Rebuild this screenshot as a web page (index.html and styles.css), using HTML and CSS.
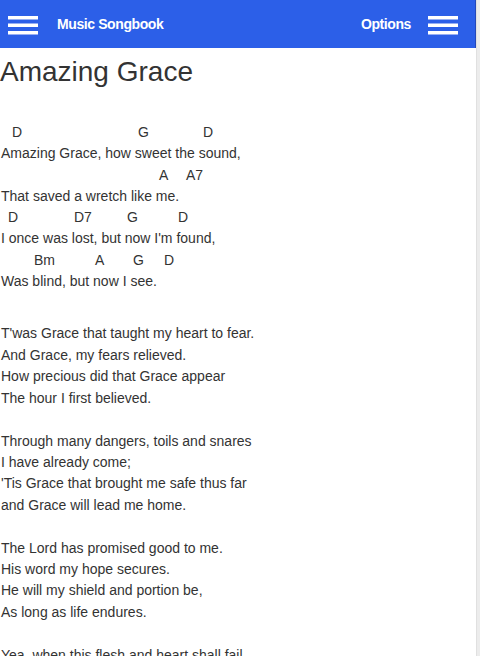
FILE: index.html
```html
<!DOCTYPE html>
<html lang="en">
<head>
<meta charset="utf-8">
<title>Music Songbook</title>
<link rel="stylesheet" href="styles.css">
</head>
<body>
<div class="page">
  <div class="main">
    <header class="topbar">
      <div class="left">
        <svg class="burger" width="30" height="19" viewBox="0 0 30 19"><rect x="0" y="0" width="30" height="3.5" fill="#fff"/><rect x="0" y="7.5" width="30" height="3.5" fill="#fff"/><rect x="0" y="15" width="30" height="3.5" fill="#fff"/></svg>
        <span class="brand">Music Songbook</span>
      </div>
      <div class="right">
        <span class="options">Options</span>
        <svg class="burger" width="30" height="19" viewBox="0 0 30 19"><rect x="0" y="0" width="30" height="3.5" fill="#fff"/><rect x="0" y="7.5" width="30" height="3.5" fill="#fff"/><rect x="0" y="15" width="30" height="3.5" fill="#fff"/></svg>
      </div>
    </header>
    <main class="song">
      <h1 class="title">Amazing Grace</h1>
      <div class="stanza chorded">
        <div class="chords"><span class="chord" style="margin-left:11px">D</span><span class="chord" style="margin-left:126px">G</span><span class="chord" style="margin-left:65px">D</span></div>
        <div class="lyric">Amazing Grace, how sweet the sound,</div>
        <div class="chords"><span class="chord" style="margin-left:158px">A</span><span class="chord" style="margin-left:27px">A7</span></div>
        <div class="lyric">That saved a wretch like me.</div>
        <div class="chords"><span class="chord" style="margin-left:7px">D</span><span class="chord" style="margin-left:66px">D7</span><span class="chord" style="margin-left:53px">G</span><span class="chord" style="margin-left:51px">D</span></div>
        <div class="lyric">I once was lost, but now I'm found,</div>
        <div class="chords"><span class="chord" style="margin-left:33px">Bm</span><span class="chord" style="margin-left:61px">A</span><span class="chord" style="margin-left:38px">G</span><span class="chord" style="margin-left:31px">D</span></div>
        <div class="lyric">Was blind, but now I see.</div>
      </div>
      <div class="stanza">
        <div class="lyric">T'was Grace that taught my heart to fear.</div>
        <div class="lyric">And Grace, my fears relieved.</div>
        <div class="lyric">How precious did that Grace appear</div>
        <div class="lyric">The hour I first believed.</div>
      </div>
      <div class="stanza">
        <div class="lyric">Through many dangers, toils and snares</div>
        <div class="lyric">I have already come;</div>
        <div class="lyric">'Tis Grace that brought me safe thus far</div>
        <div class="lyric">and Grace will lead me home.</div>
      </div>
      <div class="stanza">
        <div class="lyric">The Lord has promised good to me.</div>
        <div class="lyric">His word my hope secures.</div>
        <div class="lyric">He will my shield and portion be,</div>
        <div class="lyric">As long as life endures.</div>
      </div>
      <div class="stanza">
        <div class="lyric">Yea, when this flesh and heart shall fail,</div>
        <div class="lyric">And mortal life shall cease,</div>
        <div class="lyric">I shall possess, within the veil,</div>
        <div class="lyric">A life of joy and peace.</div>
      </div>
    </main>
  </div>
  <div class="scrollbar"></div>
</div>
</body>
</html>
```
FILE: styles.css
```css
html, body {
  margin: 0;
  padding: 0;
  height: 100%;
  overflow: hidden;
  background: #fff;
}
body {
  font-family: "Liberation Sans", Arial, Helvetica, sans-serif;
  color: #333;
}
.page {
  display: flex;
  height: 656px;
}
.main {
  flex: 1;
  min-width: 0;
  overflow: hidden;
}
.scrollbar {
  width: 3px;
  background: #ececec;
  border-left: 1px solid #e0e0e0;
}
.topbar {
  height: 48px;
  background: #2c5fe8;
  border-right: 1px solid #2548b8;
  display: flex;
  align-items: center;
  justify-content: space-between;
  padding: 0 17px 0 8px;
  color: #fff;
}
.left, .right {
  display: flex;
  align-items: center;
}
.burger {
  display: block;
  margin-top: 2px;
}
.brand {
  margin-left: 19px;
  font-weight: bold;
  font-size: 14px;
  letter-spacing: -0.4px;
}
.options {
  margin-right: 17px;
  font-weight: bold;
  font-size: 14px;
  letter-spacing: -0.4px;
}
.song {
  padding: 0 0 0 1px;
}
.title {
  margin: 7px 0 0 -1px;
  font-size: 28px;
  line-height: 34px;
  font-weight: normal;
  color: #333;
}
.stanza {
  font-size: 14px;
  line-height: 21.4px;
  margin-bottom: 21.5px;
}
.chorded {
  margin-top: 33px;
  margin-bottom: 31px;
  line-height: 21.3px;
}
.chords {
  display: flex;
  height: 21.3px;
}
.chord {
  flex: none;
  width: 0;
  white-space: nowrap;
}
.lyric {
  white-space: nowrap;
}
```
